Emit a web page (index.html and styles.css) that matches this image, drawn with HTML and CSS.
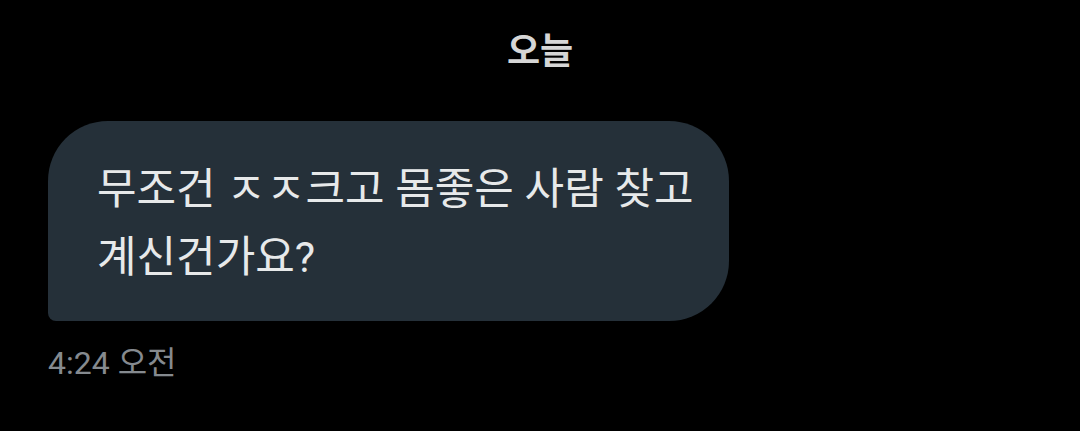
FILE: index.html
```html
<!DOCTYPE html>
<html lang="ko">
<head>
<meta charset="utf-8">
<link rel="stylesheet" href="styles.css">
</head>
<body>
<div class="page">
  <div class="day">오늘</div>
  <div class="msg">
    <div class="bubble">무조건 ㅈㅈ크고 몸좋은 사람 찾고 계신건가요?</div>
    <div class="time">4:24 오전</div>
  </div>
</div>
</body>
</html>
```
FILE: styles.css
```css
html, body {
  margin: 0;
  padding: 0;
  background: #000;
}
.page {
  width: 1080px;
  height: 431px;
  overflow: hidden;
  font-family: Roboto, "Noto Sans CJK KR", sans-serif;
  display: flex;
  flex-direction: column;
}
.day {
  text-align: center;
  color: #d6d6d6;
  font-weight: 700;
  font-size: 36px;
  line-height: 44px;
  margin-top: 30px;
}
.msg {
  display: flex;
  flex-direction: column;
  align-items: flex-start;
  padding-left: 48px;
  margin-top: 47px;
}
.bubble {
  box-sizing: border-box;
  width: 681px;
  height: 200px;
  background: #253039;
  color: #e7e9ea;
  font-size: 43px;
  line-height: 68px;
  padding: 34px 30px 0 49px;
  word-break: keep-all;
  border-radius: 60px 60px 60px 8px;
}
.time {
  margin-top: 22px;
  color: #858a8f;
  font-size: 32px;
  line-height: 40px;
}
```
